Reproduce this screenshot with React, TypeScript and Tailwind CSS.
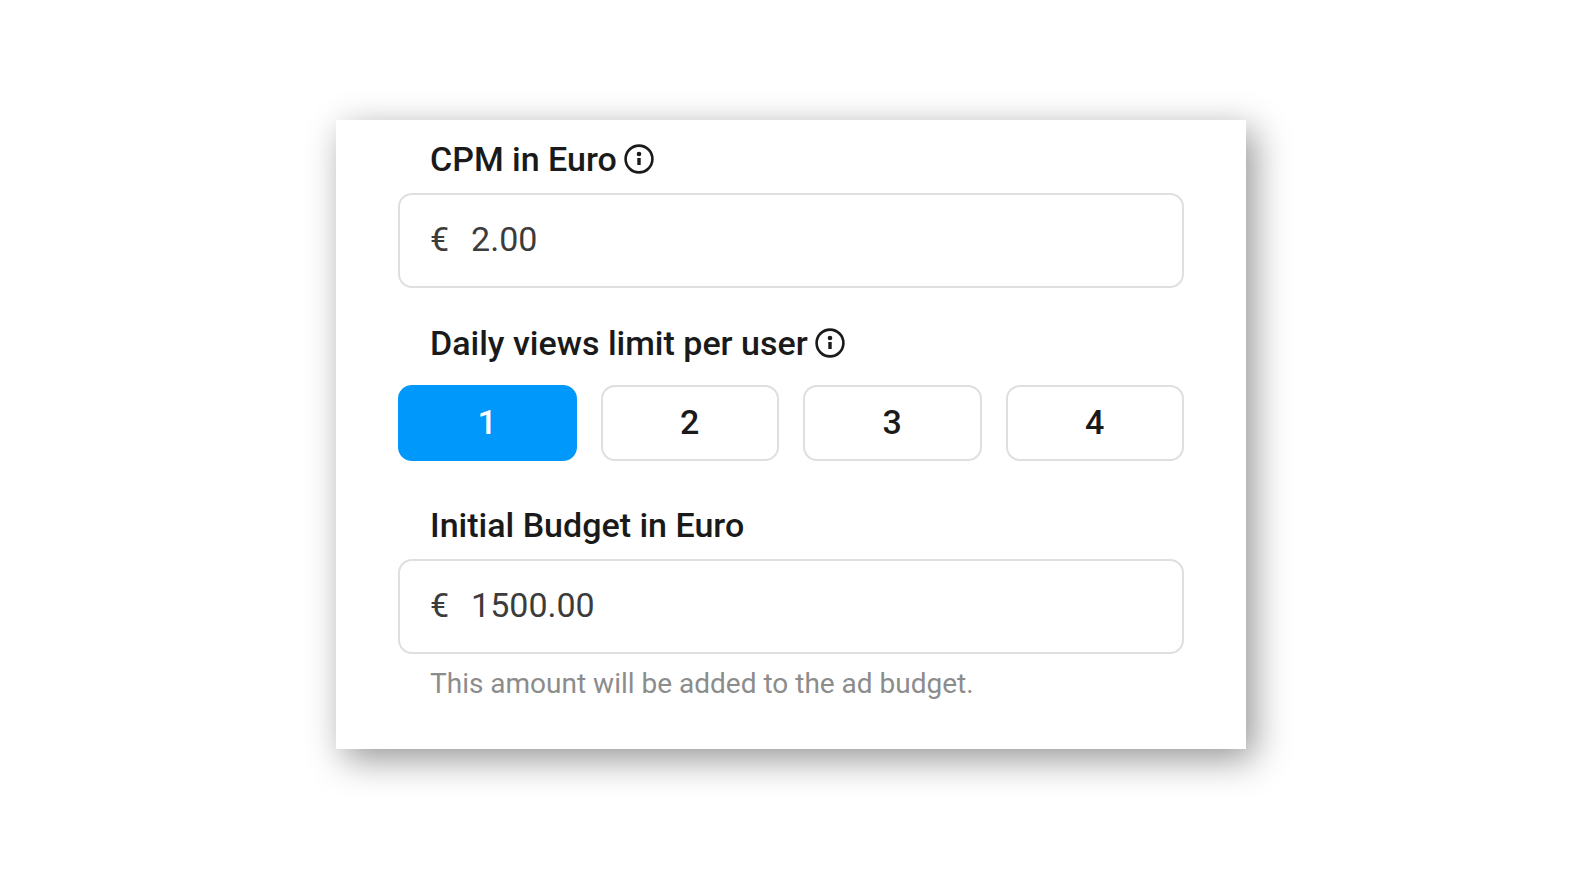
import type React from "react"
import { useState } from "react"

const VIEW_LIMITS = [1, 2, 3, 4]

export default function App() {
  const [limit, setLimit] = useState(1)

  return (
    <div className="min-h-screen bg-white pt-[120px] pr-[324px] pb-[120px] pl-[336px] font-[Roboto,sans-serif] text-[#1a1a1a]">
      <form className="bg-white px-[62px] pt-[19px] pb-[49px] shadow-[8px_10px_34px_rgba(0,0,0,0.42)]">
        <FieldLabel htmlFor="cpm" info>
          CPM in Euro
        </FieldLabel>
        <MoneyInput id="cpm" defaultValue="2.00" />

        <fieldset className="mt-[35px]">
          <legend className="flex items-center gap-1.5 px-8 text-[34px] leading-10 font-medium">
            Daily views limit per user
            <InfoIcon />
          </legend>
          <div className="mt-[22px] grid grid-cols-4 gap-6">
            {VIEW_LIMITS.map((value) => (
              <button
                key={value}
                type="button"
                aria-pressed={value === limit}
                onClick={() => setLimit(value)}
                className={`h-[76px] rounded-[14px] border-2 pb-0.5 text-[34px] leading-10 font-medium ${
                  value === limit ? "border-[#0099fb] bg-[#0099fb] text-white" : "border-[#dfdfdf] bg-white"
                }`}
              >
                {value}
              </button>
            ))}
          </div>
        </fieldset>

        <div className="mt-11">
          <FieldLabel htmlFor="budget">Initial Budget in Euro</FieldLabel>
          <MoneyInput id="budget" defaultValue="1500.00" />
          <p className="mt-[14px] px-8 text-[28px] leading-8 text-[#8c8c8c]">
            This amount will be added to the ad budget.
          </p>
        </div>
      </form>
    </div>
  )
}

function FieldLabel({
  htmlFor,
  info = false,
  children,
}: {
  htmlFor: string
  info?: boolean
  children: React.ReactNode
}) {
  return (
    <label htmlFor={htmlFor} className="flex items-center gap-1.5 px-8 text-[34px] leading-10 font-medium">
      {children}
      {info && <InfoIcon />}
    </label>
  )
}

function MoneyInput({ id, defaultValue }: { id: string; defaultValue: string }) {
  return (
    <div className="mt-[14px] flex h-[95px] items-center gap-[22px] rounded-[14px] border-2 border-[#dfdfdf] px-[30px] pb-1 text-[34px] leading-10 text-[#3c3c3c]">
      <span>€</span>
      <input
        id={id}
        type="text"
        inputMode="decimal"
        defaultValue={defaultValue}
        className="w-full min-w-0 bg-transparent outline-none"
      />
    </div>
  )
}

function InfoIcon() {
  return (
    <svg className="h-8 w-8 shrink-0" viewBox="0 0 32 32" fill="none" aria-hidden="true">
      <circle cx="16" cy="16" r="13.4" stroke="currentColor" strokeWidth="2.6" />
      <circle cx="16" cy="11" r="2.3" fill="currentColor" />
      <path d="M16 15v7" stroke="currentColor" strokeWidth="3.4" />
    </svg>
  )
}
